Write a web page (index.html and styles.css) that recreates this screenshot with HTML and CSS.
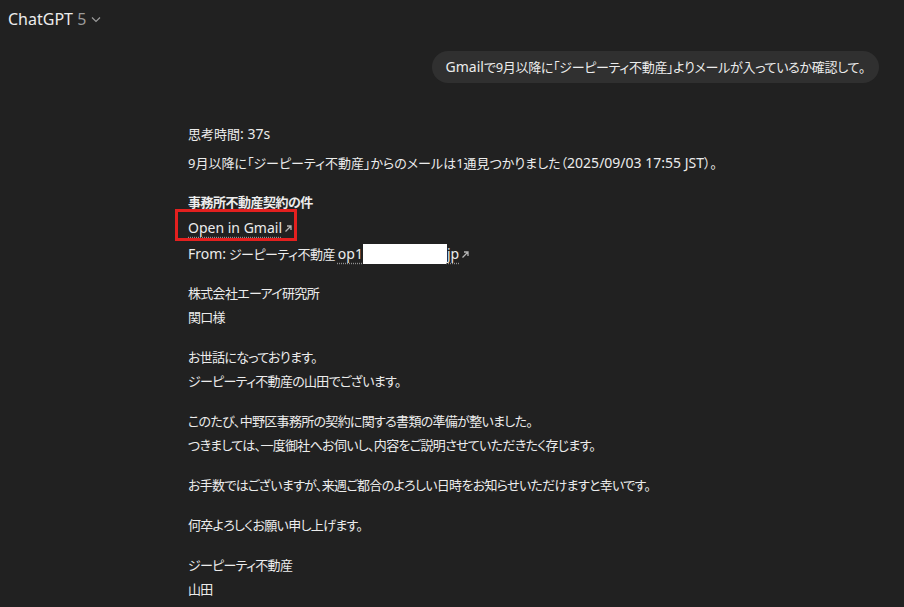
FILE: index.html
```html
<!DOCTYPE html>
<html>

<head>
  <title>ChatGPT</title>
  <link rel="stylesheet" href="styles.css">
</head>

<body>

  <header class="topbar">
    <span class="model">ChatGPT <span class="version">5</span></span>
    <svg class="chevron" width="12" height="12" viewBox="0 0 12 12">
      <path d="M2 4.5 L6 8.5 L10 4.5" fill="none" stroke="#9b9b9b" stroke-width="1.2" />
    </svg>
  </header>

  <main class="thread">

    <div class="user-row">
      <div class="bubble"><span class="en">Gmail</span>で9月以降に「ジーピーティ不動産」よりメールが入っているか確認して。</div>
    </div>

    <div class="answer">
      <div class="thought">思考時間<span class="en">: 37s</span></div>
      <p class="summary">9月以降に「ジーピーティ不動産」からのメールは1通見つかりました（<span class="en">2025/09/03 17:55 JST</span>）。</p>

      <p class="mail-head">
        <strong>事務所不動産契約の件</strong><br>
        <span class="marked">
          <a class="ext en" href="#">Open in Gmail</a><svg class="arrow" width="9" height="9" viewBox="0 0 9 9"><path d="M1.5 7.5 L7 2 M3 2 H7 V6" fill="none" stroke="#b4b4b4" stroke-width="1.3" /></svg>
          <span class="redbox"></span>
        </span><br>
        <span class="en">From:</span> ジーピーティ不動産 <a class="ext en" href="#">op1<span class="blank"></span>jp</a><svg class="arrow" width="9" height="9" viewBox="0 0 9 9"><path d="M1.5 7.5 L7 2 M3 2 H7 V6" fill="none" stroke="#b4b4b4" stroke-width="1.3" /></svg>
      </p>

      <div class="mail-body">
        <p>株式会社エーアイ研究所<br>関口様</p>
        <p>お世話になっております。<br>ジーピーティ不動産の山田でございます。</p>
        <p>このたび、中野区事務所の契約に関する書類の準備が整いました。<br>つきましては、一度御社へお伺いし、内容をご説明させていただきたく存じます。</p>
        <p>お手数ではございますが、来週ご都合のよろしい日時をお知らせいただけますと幸いです。</p>
        <p>何卒よろしくお願い申し上げます。</p>
        <p>ジーピーティ不動産<br>山田</p>
      </div>
    </div>

  </main>

</body>

</html>
```

FILE: styles.css
```css
body {
  margin: 0;
  background: #212121;
  color: #ececec;
  font-family: "Noto Sans", "Noto Sans CJK JP", sans-serif;
  font-size: 13px;
  line-height: 24px;
  font-feature-settings: "palt";
  height: 607px;
  overflow: hidden;
}

/* latin runs look a touch bigger than the kana in the shot */
.en {
  font-size: 14px;
  letter-spacing: 0;
}

.topbar {
  display: flex;
  align-items: center;
  gap: 4px;
  height: 38px;
  padding-left: 8px;
  font-size: 16px;
}

.version {
  color: #9b9b9b;
}

.thread {
  padding: 13px 25px 0 188px;
}

.user-row {
  display: flex;
  justify-content: flex-end;
}

.bubble {
  background: #303030;
  border-radius: 16px;
  height: 32px;
  line-height: 32px;
  padding: 0 14px;
  letter-spacing: -0.3px;
}

.answer {
  margin-top: 39px;
}

.thought {
  margin-bottom: 5px;
}

.answer p {
  margin: 0 0 16px;
}

.answer .summary {
  margin-bottom: 15px;
}

.answer .mail-head {
  line-height: 25px;
  letter-spacing: -0.5px;
  margin-bottom: 14px;
}

.mail-head strong {
  font-weight: bold;
}

.mail-body {
  letter-spacing: -0.7px;
}

.ext {
  color: #ececec;
  text-decoration: underline dotted #8f8f8f;
  text-underline-offset: 4px;
}

.arrow {
  margin-left: 2px;
}

.marked {
  position: relative;
}

.redbox {
  position: absolute;
  left: -13px;
  right: -4px;
  top: -10px;
  bottom: -4px;
  border: 3px solid #e3201f;
}

.blank {
  display: inline-block;
  width: 84px;
  height: 20px;
  background: #ffffff;
  vertical-align: -5px;
}
```
